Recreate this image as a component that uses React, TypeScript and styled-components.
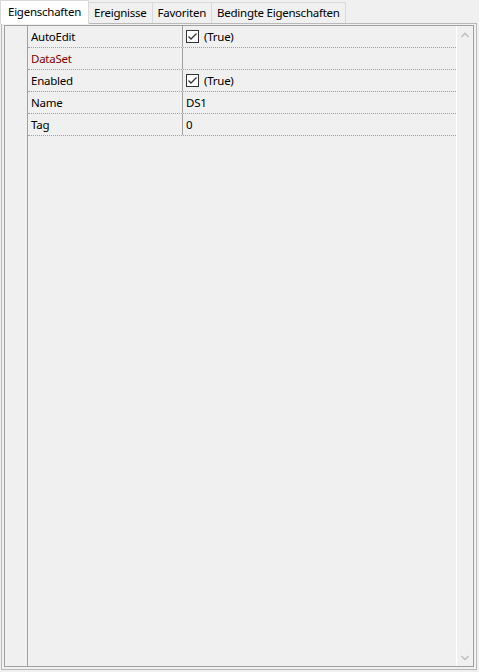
import React from "react";
import styled, { createGlobalStyle } from "styled-components";

const Global = createGlobalStyle`
  html, body { margin: 0; padding: 0; background: #f0f0f0; }
  body {
    font-family: "Noto Sans", "Open Sans", sans-serif;
    font-size: 11.5px;
    letter-spacing: -0.25px;
    color: #000;
  }
`;

const Root = styled.div`
  width: 479px;
  height: 672px;
  display: flex;
  flex-direction: column;
  background: #f0f0f0;
  overflow: hidden;
`;

const TabStrip = styled.div`
  display: flex;
  align-items: flex-end;
  height: 23px;
  position: relative;
  z-index: 1;
`;

const Tab = styled.div<{ $active?: boolean }>`
  box-sizing: border-box;
  height: ${(p) => (p.$active ? "24px" : "21px")};
  margin-bottom: ${(p) => (p.$active ? "-1px" : "0")};
  padding: 0 ${(p) => (p.$active ? "7px" : "5px")};
  padding-bottom: ${(p) => (p.$active ? "2px" : "0")};
  display: flex;
  align-items: center;
  background: ${(p) => (p.$active ? "#ffffff" : "#f0f0f0")};
  border: 1px solid #d9d9d9;
  border-bottom: none;
  margin-left: ${(p) => (p.$active ? "0" : "-1px")};
  white-space: nowrap;
  line-height: 1;
`;

const Page = styled.div`
  box-sizing: border-box;
  margin-left: 1px;
  width: 476px;
  height: 647px;
  border: 1px solid #b9b9b9;
  padding: 1px 2px 2px 2px;
  display: flex;
`;

const Frame = styled.div`
  flex: 1;
  border: 1px solid #a0a0a0;
  display: flex;
  min-height: 0;
`;

const Gutter = styled.div`
  width: 22px;
  border-right: 1px solid #a0a0a0;
  flex: none;
`;

const Rows = styled.div`
  flex: 1;
  display: flex;
  flex-direction: column;
`;

const Row = styled.div`
  display: grid;
  grid-template-columns: 154px 1px 1fr;
  height: 22px;
  box-sizing: border-box;
  border-bottom: 1px dotted #a0a0a0;
`;

const Divider = styled.div`
  background: #a0a0a0;
`;

const NameCell = styled.div<{ $accent?: boolean }>`
  display: flex;
  align-items: center;
  padding-left: 3px;
  color: ${(p) => (p.$accent ? "#800000" : "#000")};
  white-space: nowrap;
`;

const ValueCell = styled.div`
  display: flex;
  align-items: center;
  padding-left: 3px;
  gap: 5px;
  white-space: nowrap;
`;

const Check = styled.span`
  box-sizing: border-box;
  width: 13px;
  height: 13px;
  border: 1px solid #333;
  background: #fff;
  display: inline-flex;
  align-items: center;
  justify-content: center;
`;

const ScrollBar = styled.div`
  width: 16px;
  border-left: 1px solid #ffffff;
  display: flex;
  flex-direction: column;
  justify-content: space-between;
  align-items: center;
  flex: none;
`;

const Arrow = styled.div`
  height: 17px;
  width: 16px;
  display: flex;
  align-items: center;
  justify-content: center;
`;

const CheckBox = () => (
  <Check>
    <svg width="11" height="11" viewBox="0 0 11 11">
      <path d="M1.5 5.5 L4 8 L9.5 2.5" fill="none" stroke="#333" strokeWidth="1.3" />
    </svg>
  </Check>
);

const Chevron = ({ up }: { up?: boolean }) => (
  <svg width="8" height="6" viewBox="0 0 8 6">
    <path
      d={up ? "M0.5 5 L4 1.5 L7.5 5" : "M0.5 1 L4 4.5 L7.5 1"}
      fill="none"
      stroke="#c2c2c2"
      strokeWidth="1.6"
    />
  </svg>
);

const props: { name: string; value?: string; check?: boolean; accent?: boolean }[] = [
  { name: "AutoEdit", value: "(True)", check: true },
  { name: "DataSet", accent: true },
  { name: "Enabled", value: "(True)", check: true },
  { name: "Name", value: "DS1" },
  { name: "Tag", value: "0" },
];

export default function App() {
  return (
    <Root>
      <Global />
      <TabStrip>
        <Tab $active>Eigenschaften</Tab>
        <Tab>Ereignisse</Tab>
        <Tab>Favoriten</Tab>
        <Tab>Bedingte Eigenschaften</Tab>
      </TabStrip>
      <Page>
        <Frame>
          <Gutter />
          <Rows>
            {props.map((p) => (
              <Row key={p.name}>
                <NameCell $accent={p.accent}>{p.name}</NameCell>
                <Divider />
                <ValueCell>
                  {p.check && <CheckBox />}
                  {p.value}
                </ValueCell>
              </Row>
            ))}
          </Rows>
          <ScrollBar>
            <Arrow>
              <Chevron up />
            </Arrow>
            <Arrow>
              <Chevron />
            </Arrow>
          </ScrollBar>
        </Frame>
      </Page>
    </Root>
  );
}
